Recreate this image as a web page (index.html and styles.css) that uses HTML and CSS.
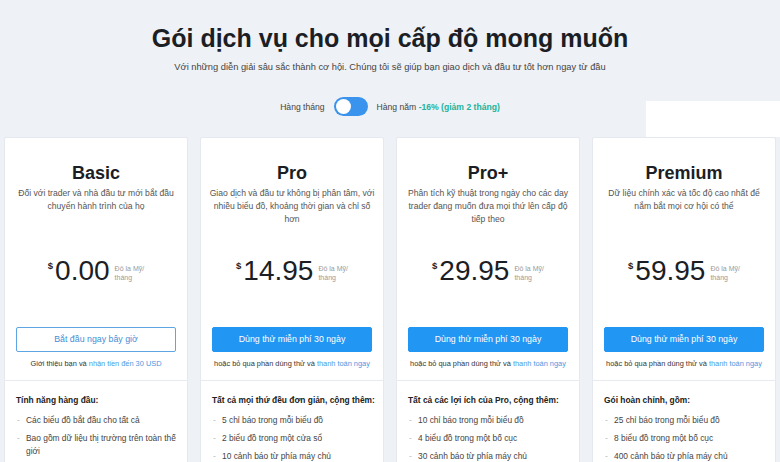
FILE: index.html
```html
<!DOCTYPE html>
<html lang="vi">
<head>
<meta charset="utf-8">
<title>Gói dịch vụ</title>
<link rel="stylesheet" href="styles.css">
</head>
<body>
<div class="page">
  <header class="hero">
    <h1 class="hero-title">Gói dịch vụ cho mọi cấp độ mong muốn</h1>
    <p class="hero-sub">Với những diễn giải sâu sắc thành cơ hội. Chúng tôi sẽ giúp bạn giao dịch và đầu tư tốt hơn ngay từ đầu</p>
    <div class="billing">
      <span class="billing-label">Hàng tháng</span>
      <span class="switch"><span class="knob"></span></span>
      <span class="billing-label">Hàng năm <b class="save">-16% (giảm 2 tháng)</b></span>
    </div>
  </header>

  <div class="corner-patch"></div>

  <section class="plans">
    <article class="plan">
      <div class="plan-top">
        <h2 class="plan-name">Basic</h2>
        <p class="plan-desc">Đối với trader và nhà đầu tư mới bắt đầu chuyển hành trình của họ</p>
        <div class="price"><span class="cur">$</span><span class="amount">0.00</span><span class="unit">Đô la Mỹ/<br>tháng</span></div>
        <a class="btn btn-outline">Bắt đầu ngay bây giờ</a>
        <p class="note">Giới thiệu bạn và <a class="link">nhận tiền đến 30 USD</a></p>
      </div>
      <div class="plan-features">
        <h3 class="feat-head">Tính năng hàng đầu:</h3>
        <ul class="feat-list">
          <li>Các biểu đồ bắt đầu cho tất cả</li>
          <li>Bao gồm dữ liệu thị trường trên toàn thế giới</li>
        </ul>
      </div>
    </article>

    <article class="plan">
      <div class="plan-top">
        <h2 class="plan-name">Pro</h2>
        <p class="plan-desc">Giao dịch và đầu tư không bị phân tâm, với nhiều biểu đồ, khoảng thời gian và chỉ số hơn</p>
        <div class="price"><span class="cur">$</span><span class="amount">14.95</span><span class="unit">Đô la Mỹ/<br>tháng</span></div>
        <a class="btn btn-fill">Dùng thử miễn phí 30 ngày</a>
        <p class="note">hoặc bỏ qua phần dùng thử và <a class="link">thanh toán ngay</a></p>
      </div>
      <div class="plan-features">
        <h3 class="feat-head">Tất cả mọi thứ đều đơn giản, cộng thêm:</h3>
        <ul class="feat-list">
          <li>5 chỉ báo trong mỗi biểu đồ</li>
          <li>2 biểu đồ trong một cửa sổ</li>
          <li>10 cảnh báo từ phía máy chủ</li>
        </ul>
      </div>
    </article>

    <article class="plan">
      <div class="plan-top">
        <h2 class="plan-name">Pro+</h2>
        <p class="plan-desc">Phân tích kỹ thuật trong ngày cho các day trader đang muốn đưa mọi thứ lên cấp độ tiếp theo</p>
        <div class="price"><span class="cur">$</span><span class="amount">29.95</span><span class="unit">Đô la Mỹ/<br>tháng</span></div>
        <a class="btn btn-fill">Dùng thử miễn phí 30 ngày</a>
        <p class="note">hoặc bỏ qua phần dùng thử và <a class="link">thanh toán ngay</a></p>
      </div>
      <div class="plan-features">
        <h3 class="feat-head">Tất cả các lợi ích của Pro, cộng thêm:</h3>
        <ul class="feat-list">
          <li>10 chỉ báo trong mỗi biểu đồ</li>
          <li>4 biểu đồ trong một bố cục</li>
          <li>30 cảnh báo từ phía máy chủ</li>
        </ul>
      </div>
    </article>

    <article class="plan">
      <div class="plan-top">
        <h2 class="plan-name">Premium</h2>
        <p class="plan-desc">Dữ liệu chính xác và tốc độ cao nhất để nắm bắt mọi cơ hội có thể</p>
        <div class="price"><span class="cur">$</span><span class="amount">59.95</span><span class="unit">Đô la Mỹ/<br>tháng</span></div>
        <a class="btn btn-fill">Dùng thử miễn phí 30 ngày</a>
        <p class="note">hoặc bỏ qua phần dùng thử và <a class="link">thanh toán ngay</a></p>
      </div>
      <div class="plan-features">
        <h3 class="feat-head">Gói hoàn chỉnh, gồm:</h3>
        <ul class="feat-list">
          <li>25 chỉ báo trong mỗi biểu đồ</li>
          <li>8 biểu đồ trong một bố cục</li>
          <li>400 cảnh báo từ phía máy chủ</li>
        </ul>
      </div>
    </article>
  </section>
</div>
</body>
</html>
```

FILE: styles.css
```css
* { box-sizing: border-box; }

html, body {
  margin: 0;
  padding: 0;
  background: #eef1f6;
  font-family: "Liberation Sans", Arial, sans-serif;
  color: #222;
  overflow: hidden;
}

.page {
  position: relative;
  width: 780px;
  height: 462px;
  overflow: hidden;
}

.hero {
  padding-top: 23px;
  text-align: center;
}

.hero-title {
  margin: 0;
  font-size: 25px;
  line-height: 30px;
  font-weight: bold;
  color: #1b1e24;
}

.hero-sub {
  margin: 8px 0 0;
  font-size: 9.3px;
  line-height: 12px;
  color: #444;
}

.billing {
  margin-top: 24px;
  height: 19px;
  display: flex;
  justify-content: center;
  align-items: center;
  gap: 9px;
  font-size: 8.6px;
  color: #444;
}

.save {
  color: #23b39a;
  font-weight: bold;
}

.switch {
  width: 34px;
  height: 19px;
  border-radius: 10px;
  background: #3a93ec;
  display: flex;
  align-items: center;
  padding: 0 2px;
}

.knob {
  width: 15px;
  height: 15px;
  border-radius: 50%;
  background: #fff;
}

.corner-patch {
  position: absolute;
  left: 646px;
  top: 101px;
  width: 134px;
  height: 36px;
  background: #fff;
}

.plans {
  margin-top: 21px;
  padding-left: 4px;
  display: grid;
  grid-template-columns: repeat(4, 184px);
  column-gap: 12px;
  position: relative;
}

.plan {
  background: #fff;
  border: 1px solid #e5e8ee;
  border-radius: 2px;
  height: 340px;
}

.plan-top {
  padding: 24px 8px 11px;
  text-align: center;
  border-bottom: 1px solid #e7eaef;
}

.plan-name {
  margin: 0;
  font-size: 18px;
  line-height: 22px;
  font-weight: bold;
  color: #1b1e24;
}

.plan-desc {
  margin: 3px 0 0;
  height: 70px;
  font-size: 8.6px;
  line-height: 13px;
  color: #555;
}

.price {
  display: flex;
  justify-content: center;
  align-items: flex-start;
  height: 28px;
}

.cur {
  font-size: 9.5px;
  font-weight: bold;
  line-height: 10px;
  margin-top: 4px;
  margin-right: 2px;
  color: #222;
}

.amount {
  font-size: 28px;
  line-height: 28px;
  color: #1b1e24;
}

.unit {
  margin: 7px 0 0 5px;
  font-size: 7px;
  line-height: 9px;
  color: #9a9a9a;
  text-align: left;
}

.btn {
  display: block;
  margin: 42px 3px 0;
  height: 25px;
  line-height: 23px;
  border-radius: 2px;
  font-size: 8.8px;
  border: 1px solid transparent;
}

.btn-outline {
  background: #fff;
  border-color: #5ea5e3;
  color: #3f8fd6;
}

.btn-fill {
  background: #2196f3;
  border-color: #2196f3;
  color: #fff;
}

.note {
  margin: 7px 0 0;
  font-size: 7.4px;
  line-height: 10px;
  color: #333;
}

.link {
  color: #4a98df;
}

.plan-features {
  padding: 13px 5px 12px 11px;
}

.feat-head {
  margin: 0;
  font-size: 8.4px;
  line-height: 13px;
  font-weight: bold;
  color: #222;
}

.feat-list {
  list-style: none;
  margin: 7px 0 0;
  padding: 0;
}

.feat-list li {
  position: relative;
  padding-left: 10px;
  padding-right: 6px;
  margin-bottom: 5px;
  font-size: 8.4px;
  line-height: 13px;
  color: #444;
}

.feat-list li::before {
  content: "-";
  position: absolute;
  left: 1px;
  top: 0;
  color: #bbb;
}
```
